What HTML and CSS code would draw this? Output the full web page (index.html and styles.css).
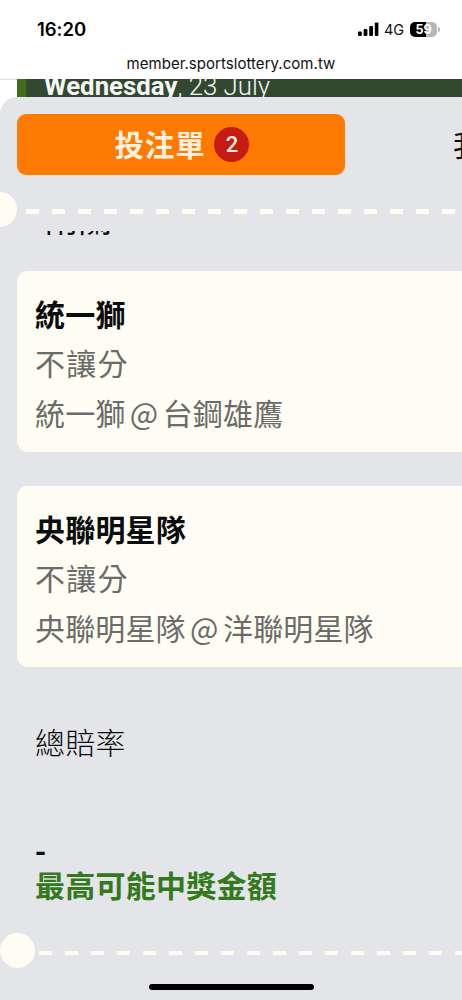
FILE: index.html
```html
<!DOCTYPE html>
<html lang="zh-Hant">
<head>
<meta charset="utf-8">
<title>投注單</title>
<link rel="stylesheet" href="styles.css">
</head>
<body>
<div class="screen">
  <header class="status">
    <div class="status-row">
      <span class="time">16:20</span>
      <div class="indicators">
        <svg class="signal" width="21" height="14" viewBox="0 0 21 14"><rect x="0" y="9.4" width="3.8" height="4.6" rx="1"/><rect x="5.6" y="7" width="3.8" height="7" rx="1"/><rect x="11.2" y="4" width="3.8" height="10" rx="1"/><rect x="16.8" y="0.4" width="3.6" height="13.6" rx="1"/></svg>
        <span class="network">4G</span>
        <div class="battery"><span class="level">59</span><i class="cap"></i></div>
      </div>
    </div>
    <div class="address">member.sportslottery.com.tw</div>
  </header>
  <div class="backdrop"><div class="date"><span><b>Wednesday</b>, 23 July</span></div></div>
  <main class="sheet">
    <nav class="tabs">
      <div class="tab active"><span class="label">投注單</span><span class="count">2</span></div>
      <div class="tab other"><span class="label">我的投注</span></div>
    </nav>
    <div class="divider"><i class="notch"></i><i class="dashes"></i></div>
    <div class="parlay"><span>兩關</span></div>
    <section class="card">
      <h2>統一獅</h2>
      <p class="market">不讓分</p>
      <p class="match">統一獅 @ 台鋼雄鷹</p>
    </section>
    <section class="card">
      <h2>央聯明星隊</h2>
      <p class="market">不讓分</p>
      <p class="match">央聯明星隊 @ 洋聯明星隊</p>
    </section>
    <div class="odds">總賠率</div>
    <div class="amount">-</div>
    <div class="payout">最高可能中獎金額</div>
    <div class="divider lower"><i class="notch"></i><i class="dashes"></i></div>
    <div class="home"><i></i></div>
  </main>
</div>
</body>
</html>
```
FILE: styles.css
```css
* { box-sizing: border-box; }
body { margin: 0; background: #fff; }
h2, p { margin: 0; }
.screen {
  width: 462px;
  height: 1000px;
  overflow: hidden;
  font-family: "Noto Sans CJK TC", sans-serif;
  color: #0b0c0e;
}
.status {
  height: 79px;
  font-family: Inter, "Liberation Sans", sans-serif;
  color: #111;
}
.status-row {
  display: flex;
  justify-content: space-between;
  height: 52px;
  padding: 18px 22px 0 37px;
}
.time { font-size: 18.5px; line-height: 23px; font-weight: 600; letter-spacing: -.05px; color: #000; }
.indicators { display: flex; height: 23px; align-items: center; }
.signal { margin-top: -1px; fill: #000; }
.network { margin-left: 5px; width: 22px; font-size: 14.5px; letter-spacing: -.1px; }
.battery {
  position: relative;
  width: 27px;
  height: 15px;
  margin: 0 3px 0 4px;
  border-radius: 5px;
  background: linear-gradient(90deg, #000 59%, #b6b6b6 59%);
}
.level { display: block; text-align: center; font-size: 12.5px; line-height: 15px; font-weight: 700; color: #fff; }
.cap { position: absolute; left: 28px; top: 5px; width: 1.5px; height: 5px; border-radius: 0 2px 2px 0; background: #b6b6b6; }
.address { text-align: center; font-size: 15px; line-height: 24px; letter-spacing: .04px; }
.backdrop { height: 18px; padding-left: 17px; border-top: 1px solid #dedede; background: #fff; }
.date {
  height: 18px;
  margin-top: -1px;
  border-left: 9px solid #3f6d1b;
  background: #334831;
  padding-left: 18px;
  overflow: hidden;
  font: 300 25.8px/28px Roboto, sans-serif;
  color: #f4f7f3;
  white-space: nowrap;
}
.date span { display: block; margin-top: -7px; }
.date b { font-weight: 700; }
.sheet {
  position: relative;
  height: 903px;
  border-radius: 17px 0 0 0;
  background: #e4e5e8;
  padding-top: 17px;
}
.tabs { display: flex; height: 61px; padding-left: 17px; }
.tab { display: flex; flex: none; align-items: center; font-size: 29.5px; letter-spacing: .8px; white-space: nowrap; }
.label { line-height: 44px; padding-bottom: 4px; }
.active {
  width: 328px;
  justify-content: center;
  gap: 9px;
  border-radius: 9px;
  background: #ff7a00;
  color: #fff0df;
  font-weight: 700;
  padding-left: 2px;
}
.count {
  width: 35px;
  height: 35px;
  border-radius: 50%;
  background: #c41c12;
  text-align: center;
  font: 500 22px/36px Roboto, sans-serif;
  letter-spacing: 0;
}
.other { margin-left: 108px; }
.divider { display: flex; align-items: flex-start; height: 35px; margin-top: 17px; margin-left: -17px; }
.notch { flex: none; width: 34px; height: 35px; border-radius: 50%; background: #fffdf3; }
.dashes {
  flex: 1;
  height: 5px;
  margin: 17px 0 0 9px;
  background: repeating-linear-gradient(90deg, #fffdf3 0 13px, transparent 13px 26px);
}
.parlay { height: 8px; margin: 4px 0 0 44px; overflow: hidden; font-size: 34px; line-height: 34px; font-weight: 400; }
.parlay span { display: block; margin-top: -30px; }
.card {
  height: 181px;
  margin: 32px 0 0 17px;
  padding: 18px;
  border-radius: 11px 0 0 11px;
  background: #fffdf3;
  font-size: 30px;
  line-height: 50px;
  color: #6b6b69;
  white-space: nowrap;
}
.card + .card { margin-top: 34px; }
.card h2 { font-size: 30px; font-weight: 700; line-height: 48px; letter-spacing: .2px; color: #0b0c0e; }
.market { line-height: 50px; letter-spacing: 1.3px; }
.match { letter-spacing: .15px; word-spacing: -2.5px; }
.odds { margin: 50px 0 0 35px; font-size: 30px; line-height: 48px; font-weight: 300; letter-spacing: .2px; }
.amount { margin: 66px 0 0 35px; font-size: 30px; line-height: 36px; font-weight: 700; }
.payout { margin: -3px 0 0 35px; font-size: 30px; line-height: 40px; font-weight: 700; letter-spacing: .25px; color: #34791d; }
.lower { margin: 29px 0 0; }
.lower .notch { width: 35px; }
.lower .dashes { height: 4px; margin: 18px 0 0 4px; }
.home { display: flex; justify-content: center; margin-top: 16px; }
.home i { width: 165px; height: 6px; border-radius: 3px; background: #000; }
```
